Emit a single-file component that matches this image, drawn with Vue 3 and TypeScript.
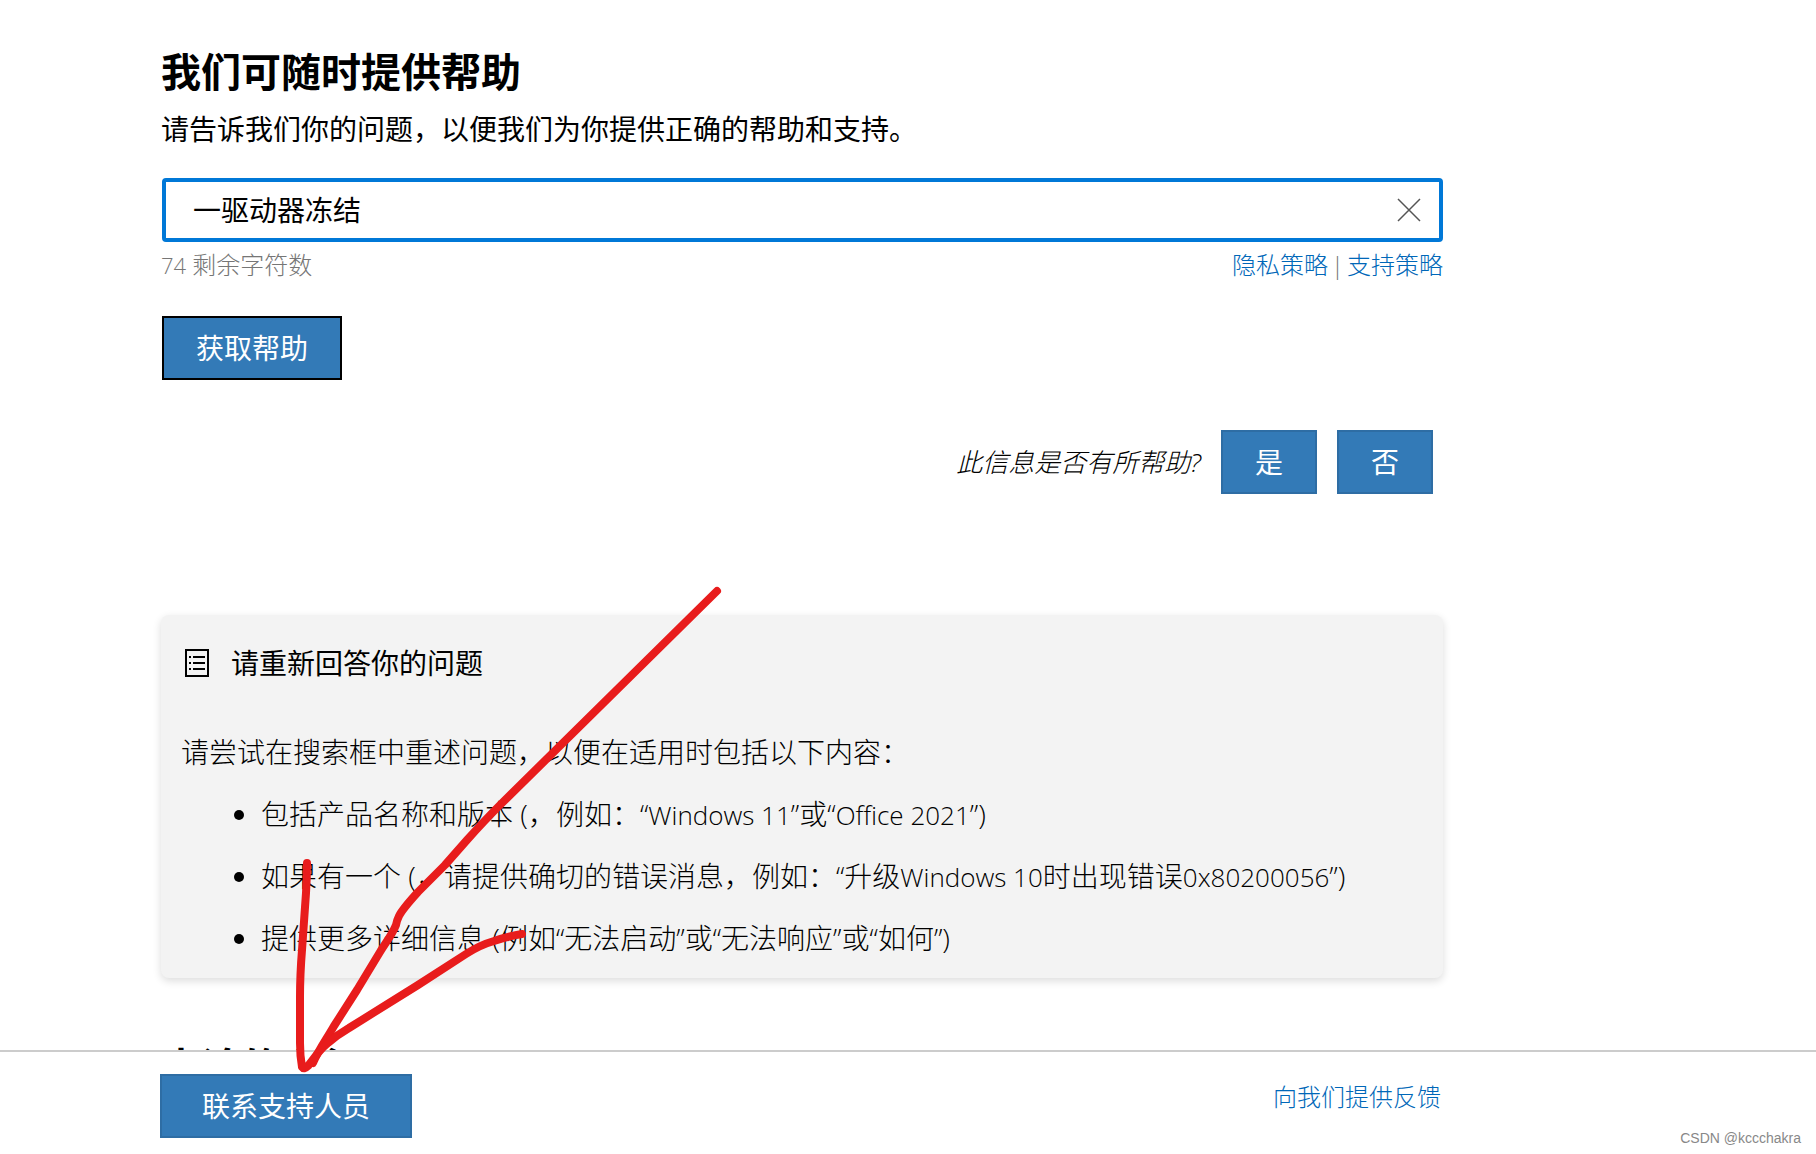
<script setup lang="ts">
import { ref } from 'vue'

const maxLength = 80
const query = ref('一驱动器冻结')
const remaining = () => maxLength - query.value.length

const tips: string[] = [
  '包括产品名称和版本 (，例如：“Windows 11”或“Office 2021”)',
  '如果有一个 (，请提供确切的错误消息，例如：“升级Windows 10时出现错误0x80200056”)',
  '提供更多详细信息 (例如“无法启动”或“无法响应”或“如何”)',
]

// Odd entries are the Latin runs, which are set slightly smaller than the Chinese text.
const runs = (text: string) => text.split(/([A-Za-z0-9][A-Za-z0-9 ]*)/)
</script>

<template>
  <div class="page">
    <main class="content">
      <h1>我们可随时提供帮助</h1>
      <label class="intro" for="query">请告诉我们你的问题，以便我们为你提供正确的帮助和支持。</label>

      <div class="search">
        <input id="query" v-model="query" type="text" :maxlength="maxLength" />
        <button class="clear" type="button" aria-label="清除" @click="query = ''">
          <svg width="24" height="24" viewBox="0 0 24 24" aria-hidden="true">
            <path d="M1 1 23 23M23 1 1 23" />
          </svg>
        </button>
      </div>

      <div class="meta">
        <span class="count"><span class="digits">{{ remaining() }}</span> 剩余字符数</span>
        <span class="policies"><a href="#privacy">隐私策略</a><span>|</span><a href="#support">支持策略</a></span>
      </div>

      <button class="btn submit" type="button">获取帮助</button>

      <div class="helpful">
        <em>此信息是否有所帮助?</em>
        <button class="btn" type="button">是</button>
        <button class="btn" type="button">否</button>
      </div>

      <section class="card">
        <h2>
          <svg width="26" height="30" viewBox="0 0 26 30" aria-hidden="true">
            <rect x="2" y="2" width="22" height="26" />
            <path d="M9 9H21M9 15H21M9 21H21M5 9H7M5 15H7M5 21H7" />
          </svg>
          请重新回答你的问题
        </h2>
        <p>请尝试在搜索框中重述问题，以便在适用时包括以下内容：</p>
        <ul>
          <li v-for="tip in tips" :key="tip"><span v-for="(run, i) in runs(tip)" :key="i" :class="{ latin: i % 2 === 1 }">{{ run }}</span></li>
        </ul>
      </section>

      <h1 class="next">本论的多行</h1>
    </main>

    <footer class="bar">
      <button class="btn contact" type="button">联系支持人员</button>
      <a class="feedback" href="#feedback">向我们提供反馈</a>
      <span class="watermark">CSDN @kccchakra</span>
    </footer>

    <svg class="arrow" width="450" height="500" viewBox="290 580 450 500" aria-hidden="true">
      <path d="M717 591 500 805C485 820 476 830 467 840L445 865 418 892C408 903 402 910 399 916Q397 920 396 925C392 935 386 942 380 952L357 990 334 1026C326 1040 319 1049 313 1063" />
      <path d="M307 863Q307 878 306 893L302 950Q300 975 300 997V1043Q300 1056 302 1067Q304 1070 308 1066L318 1053Q323 1047 328 1043Q337 1035 349 1028L418 985 466 954Q480 945 494 941 508 936 522 934" />
    </svg>
  </div>
</template>

<style>
body {
  margin: 0;
  background: #fff;
}
</style>

<style scoped>
.page {
  position: relative;
  display: flex;
  flex-direction: column;
  height: 100vh;
  overflow: hidden;
  box-sizing: border-box;
  color: #000;
  font-family: 'Open Sans', 'Noto Sans CJK SC', sans-serif;
  font-size: 28px;
  font-weight: 300;
  line-height: 40px;
}

.content {
  flex: 1;
  min-height: 0;
  overflow: hidden;
  padding: 44px 373px 0 161px;
}

h1 {
  margin: 0;
  font-size: 40px;
  font-weight: 700;
  line-height: 56px;
}

.intro {
  display: block;
  margin: 8px 0 28px;
  font-weight: 400;
  line-height: 42px;
}

.search {
  display: flex;
  align-items: center;
  box-sizing: border-box;
  height: 64px;
  margin-left: 1px;
  padding: 0 18px 0 27px;
  border: 4px solid #0078d7;
  border-radius: 4px;
}

.search input {
  flex: 1;
  min-width: 0;
  padding: 0;
  border: 0;
  outline: 0;
  background: none;
  color: #000;
  font: inherit;
  font-weight: 400;
}

.clear {
  display: flex;
  padding: 0;
  border: 0;
  background: none;
}

.clear path {
  fill: none;
  stroke: #555;
  stroke-width: 1.5;
}

.meta {
  display: flex;
  justify-content: space-between;
  margin: 7px 0 35px;
  color: #767676;
  font-size: 24px;
  line-height: 32px;
}

.digits {
  font-size: 22px;
}

.policies {
  display: flex;
  gap: 3px;
}

a {
  color: #0067b8;
  text-decoration: none;
}

.btn {
  box-sizing: border-box;
  height: 64px;
  padding: 0 32px;
  border: 2px solid #2e6da4;
  border-radius: 0;
  background: #337ab7;
  color: #fff;
  font: inherit;
  font-weight: 400;
}

.submit {
  display: block;
  margin-left: 1px;
  border-color: #000;
}

.helpful {
  display: flex;
  align-items: center;
  justify-content: flex-end;
  gap: 20px;
  margin: 50px 10px 121px 0;
}

.helpful em {
  font-size: 26px;
}

.card {
  padding: 28px 20px 20px;
  border-radius: 8px;
  background: #f3f3f3;
  box-shadow: 0 3px 8px rgba(0, 0, 0, 0.14);
}

h2 {
  display: flex;
  align-items: center;
  gap: 21px;
  margin: 0 0 49px;
  padding-left: 3px;
  font-size: 28px;
  font-weight: 400;
  line-height: 40px;
}

h2 svg {
  fill: none;
  stroke: #000;
  stroke-width: 2;
}

.card p {
  margin: 0 0 22px;
}

ul {
  display: flex;
  flex-direction: column;
  gap: 22px;
  margin: 0;
  padding-left: 80px;
}

.latin {
  font-size: 26px;
  line-height: 1;
}

.next {
  margin-top: 61px;
}

.bar {
  position: relative;
  display: flex;
  align-items: flex-start;
  justify-content: space-between;
  box-sizing: border-box;
  height: 104px;
  padding: 22px 375px 0 160px;
  border-top: 2px solid #ccc;
  background: #fff;
}

.contact {
  padding: 0 40px;
}

.feedback {
  margin-top: 7px;
  font-size: 24px;
  line-height: 32px;
}

.watermark {
  position: absolute;
  right: 15px;
  bottom: 6px;
  color: #888;
  font-family: 'Liberation Sans', sans-serif;
  font-size: 14px;
  font-weight: 400;
  line-height: 20px;
}

.arrow {
  position: absolute;
  top: 580px;
  left: 290px;
  fill: none;
  stroke: #e81c1c;
  stroke-width: 8;
  stroke-linecap: round;
  stroke-linejoin: round;
  pointer-events: none;
}
</style>
